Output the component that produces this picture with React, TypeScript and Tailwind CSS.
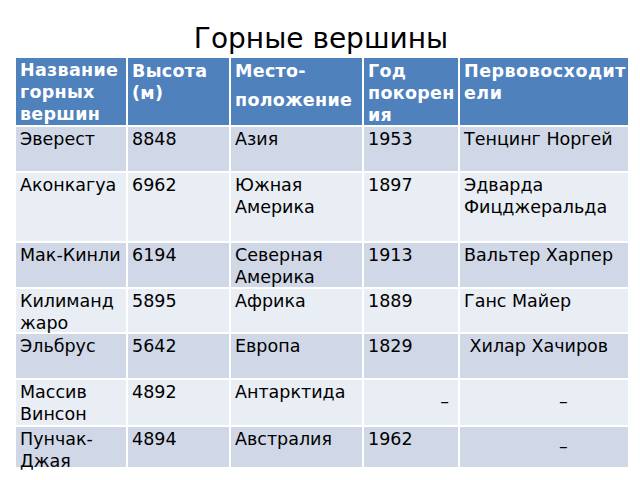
const rows: { cells: React.ReactNode[] }[] = [
  { cells: ["Эверест", "8848", "Азия", "1953", "Тенцинг Норгей"] },
  { cells: ["Аконкагуа", "6962", <>Южная<br />Америка</>, "1897", <>Эдварда<br />Фицджеральда</>] },
  { cells: ["Мак-Кинли", "6194", <>Северная<br />Америка</>, "1913", "Вальтер Харпер"] },
  { cells: [<>Килиманд<br />жаро</>, "5895", "Африка", "1889", "Ганс Майер"] },
  { cells: ["Эльбрус", "5642", "Европа", "1829", "\u00a0Хилар Хачиров"] },
  {
    cells: [
      <>Массив<br />Винсон</>,
      "4892",
      "Антарктида",
      <div className="pt-[9px] pr-[9px] text-right">–</div>,
      <div className="pt-[9px] pl-[95px]">–</div>,
    ],
  },
  {
    cells: [
      <>Пунчак-<br />Джая</>,
      "4894",
      "Австралия",
      "1962",
      <div className="pt-[7px] pl-[95px]">–</div>,
    ],
  },
];

export default function App() {
  return (
    <div
      className="w-[640px] h-[480px] bg-white text-black overflow-hidden"
      style={{ fontFamily: '"DejaVu Sans", Verdana, sans-serif' }}
    >
      <div className="h-[58px] pt-[22px] pl-[2px] text-center text-[28px] leading-[34px]">Горные вершины</div>
      <div className="ml-[16px] grid w-[612px] grid-cols-[110px_101px_131px_94px_168px] grid-rows-[67px_44px_68px_44px_43px_44px_45px_40px] gap-[2px] text-[17.5px] leading-[22px]">
        <div className="bg-[#4f81bd] pl-[4px] pt-[1px] font-bold tracking-[0.3px] text-white">
          Название<br />горных<br />вершин
        </div>
        <div className="bg-[#4f81bd] pl-[4px] pt-[2px] font-bold tracking-[0.3px] text-white">
          Высота<br />(м)
        </div>
        <div className="bg-[#4f81bd] pl-[4px] pt-[2px] font-bold tracking-[0.3px] text-white">
          <div>Место-</div>
          <div className="mt-[7px]">положение</div>
        </div>
        <div className="bg-[#4f81bd] pl-[4px] pt-[2px] font-bold tracking-[0.3px] text-white">
          Год<br />покорен<br />ия
        </div>
        <div className="bg-[#4f81bd] pl-[4px] pt-[2px] font-bold tracking-[0.5px] text-white">
          Первовосходит<br />ели
        </div>
        {rows.map((row, i) =>
          row.cells.map((cell, j) => (
            <div
              key={`${i}-${j}`}
              className={`${i % 2 === 0 ? "bg-[#d0d8e8]" : "bg-[#e9edf4]"} pl-[4px] pt-[1px]`}
            >
              {cell}
            </div>
          ))
        )}
      </div>
    </div>
  );
}
